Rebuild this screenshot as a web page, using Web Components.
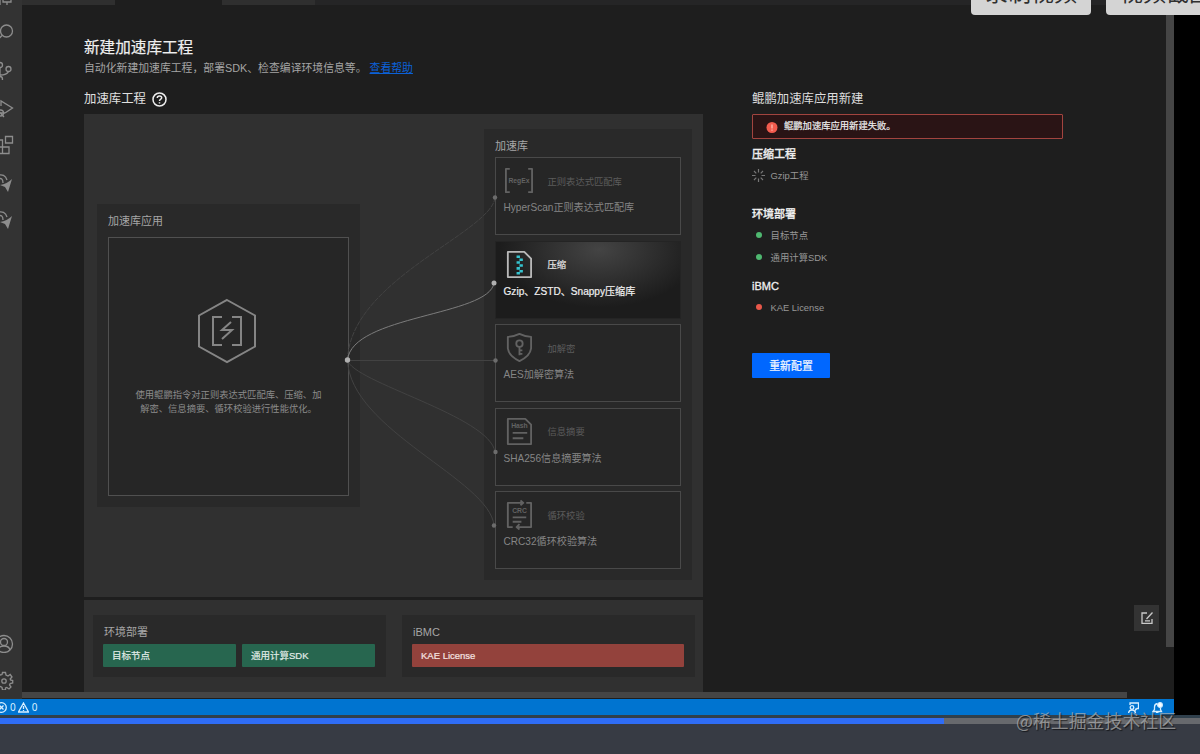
<!DOCTYPE html>
<html lang="zh-CN">
<head>
<meta charset="utf-8">
<title>新建加速库工程</title>
<style>
  html, body {
    margin: 0;
    height: 100%;
    overflow: hidden;
    background: #000;
    font-family: "Liberation Sans", "Noto Sans CJK SC", sans-serif;
  }
</style>
</head>
<body>
<player-shell></player-shell>

<script>
const define = (name, html, setup) => {
  const template = document.createElement("template");
  template.innerHTML = html;

  customElements.define(
    name,
    class extends HTMLElement {
      constructor() {
        super();
        this.attachShadow({ mode: "open" });
      }

      connectedCallback() {
        if (this.shadowRoot.firstChild) return;
        this.shadowRoot.appendChild(template.content.cloneNode(true));
        if (setup) setup.call(this, this.shadowRoot);
      }
    }
  );
};

const glyphs = {
  regex: `<path d="M7 4H3V28H7M26 4H30V28H26"/><text x="16.500" y="19" text-anchor="middle">RegEx</text>`,
  zip: `<path d="M5 3H22L29 10V29H5Z"/><path stroke="#35c3cf" stroke-width="2.600" d="M14 8h3.500M17 11h3.500M14 14h3.500M17 17h3.500M14 20h3.500M17 23h3.500M14 25h3.500"/>`,
  shield: `<path d="M17 2Q23 5 29 5V17Q28 25 17 30Q6 25 5 17V5Q11 5 17 2Z"/><circle cx="17" cy="12" r="3.300"/><path d="M17 15.500V24M17 19h3M17 22.500h3"/>`,
  hash: `<path d="M5 3H23L29 9V29H5Z"/><path d="M10 17.500H25M10 23H21"/><text x="17" y="12.500" text-anchor="middle">Hash</text>`,
  crc: `<path d="M10 29H5V4H20M24 4H29V29H15M18 1.500L21 4L18 6.500M17 26L14 29L17 31.500"/><path d="M10 19H24M10 23.500H19"/><text x="17" y="14" text-anchor="middle">CRC</text>`,
};

define(
  "lib-card",
  `<style>
    :host {
      box-sizing: border-box;
      display: flex;
      flex-direction: column;
      height: 78px;
      padding: 6px 0 0 7.500px;
      border: 1px solid #494949;
      background: #262626;
      color: #858585;
    }
    :host([active]) {
      border-color: #242424;
      background: radial-gradient(ellipse 100px 58px at 56% 10%, #444, #1c1c1c);
      color: #f0f0f0;
      -webkit-text-stroke: .2px;
    }
    .top {
      display: flex;
      align-items: center;
      gap: 14px;
      height: 33px;
      margin-left: -1px;
      font-size: 9.300px;
      color: #5c5c5c;
    }
    :host([active]) .top { color: #e4e4e4; }
    svg {
      width: 31px;
      height: 31px;
      fill: none;
      stroke: #626262;
      stroke-width: 1.900;
      stroke-linejoin: round;
    }
    :host([active]) svg { stroke: #b9b9b9; }
    svg text {
      font-size: 7px;
      font-weight: bold;
      fill: #626262;
      stroke: none;
    }
    .note {
      font-size: 10.100px;
      line-height: 21px;
      white-space: nowrap;
    }
  </style>
  <div class="top"><svg viewBox="0 0 32 32"></svg><span></span></div>
  <div class="note"><slot></slot></div>`,
  function (root) {
    root.querySelector("svg").innerHTML = glyphs[this.getAttribute("icon")];
    root.querySelector("span").textContent = this.getAttribute("name");
  }
);

define(
  "group-panel",
  `<style>
    :host {
      box-sizing: border-box;
      display: block;
      padding: 0 11px;
      background: #292929;
    }
    header {
      height: var(--head, 29px);
      font-size: 11px;
      line-height: 34px;
      text-indent: var(--indent, 0);
      color: #a6a6a6;
    }
    div {
      display: flex;
      flex-direction: var(--dir, row);
      gap: var(--gap, 6px);
    }
  </style>
  <header></header>
  <div><slot></slot></div>`,
  function (root) {
    root.querySelector("header").textContent = this.getAttribute("heading");
  }
);

define(
  "state-bar",
  `<style>
    :host {
      flex: 1;
      height: 23px;
      padding-left: 9px;
      border-radius: 1px;
      background: #27664f;
      color: #e2ece8;
      font-size: 9.500px;
      line-height: 23px;
      -webkit-text-stroke: .2px;
    }
    :host([kind="fail"]) { background: #93423c; color: #f6e4e2; }
  </style>
  <slot></slot>`
);

define(
  "app-box",
  `<style>
    :host {
      box-sizing: border-box;
      display: flex;
      flex-direction: column;
      align-items: center;
      width: 241px;
      height: 259px;
      padding-top: 60px;
      border: 1px solid #505050;
      background: #262626;
    }
    svg {
      width: 60px;
      height: 66px;
      margin-right: 3px;
      fill: none;
      stroke: #858585;
      stroke-width: 2;
    }
    p {
      width: 190px;
      margin: 24px 0 0;
      font-size: 9.300px;
      line-height: 14px;
      text-align: center;
      color: #8b8b8b;
    }
  </style>
  <svg viewBox="0 0 60 66">
    <path d="M30 2L58 17.500V48.500L30 64L2 48.500V17.500Z"/>
    <path d="M25 19H16V47H25M35 19H44V47H35M34 24L25 32H35L25 41"/>
  </svg>
  <p><slot></slot></p>`
);

define(
  "flow-board",
  `<style>
    :host {
      position: relative;
      box-sizing: border-box;
      display: flex;
      align-items: flex-start;
      gap: 124px;
      height: 483px;
      padding-left: 13px;
      background: #303030;
    }
    .app {
      --head: 33px;
      width: 263px;
      height: 303px;
      margin-top: 90px;
    }
    .libs {
      --head: 28px;
      --dir: column;
      --gap: 5.600px;
      width: 208px;
      height: 451px;
      margin-top: 15px;
    }
    .wires {
      position: absolute;
      inset: 0;
      fill: none;
      stroke: #424242;
    }
    circle { fill: #6c6c6c; stroke: none; }
    .on { stroke: #7c7c7c; }
    circle.on { fill: #b0b0b0; stroke: none; }
  </style>
  <group-panel class="app" heading="加速库应用">
    <app-box>使用鲲鹏指令对正则表达式匹配库、压缩、加<br>解密、信息摘要、循环校验进行性能优化。</app-box>
  </group-panel>
  <group-panel class="libs" heading="加速库">
    <lib-card icon="regex" name="正则表达式匹配库">HyperScan正则表达式匹配库</lib-card>
    <lib-card icon="zip" name="压缩" active>Gzip、ZSTD、Snappy压缩库</lib-card>
    <lib-card icon="shield" name="加解密">AES加解密算法</lib-card>
    <lib-card icon="hash" name="信息摘要">SHA256信息摘要算法</lib-card>
    <lib-card icon="crc" name="循环校验">CRC32循环校验算法</lib-card>
  </group-panel>
  <svg class="wires" width="619" height="483">
    <path stroke-dasharray="5 1" d="M263.500 246C266 166 406 119 411 84"/>
    <path d="M263.500 246.500H411"/>
    <path d="M263.500 246C268 268 406 302 411 338"/>
    <path d="M263.500 246C266 316 406 366 410 411.500"/>
    <path class="on" d="M263.500 246C268 201 405 202 410 169"/>
    <circle cx="411" cy="83.500" r="2.200"/>
    <circle cx="411.500" cy="246.500" r="2.200"/>
    <circle cx="411.500" cy="338" r="2.200"/>
    <circle cx="410" cy="411.500" r="2.200"/>
    <circle class="on" cx="410" cy="169" r="2.500"/>
    <circle class="on" cx="263.500" cy="246" r="2.700"/>
  </svg>`
);

define(
  "deploy-board",
  `<style>
    :host {
      box-sizing: border-box;
      display: flex;
      gap: 16px;
      height: 92px;
      margin-top: 3px;
      padding: 15px 8px 0 9px;
      background: #303030;
    }
    group-panel {
      --indent: 1px;
      flex: 1;
      height: 62px;
      padding: 0 11px 0 10px;
    }
  </style>
  <group-panel heading="环境部署">
    <state-bar>目标节点</state-bar>
    <state-bar>通用计算SDK</state-bar>
  </group-panel>
  <group-panel heading="iBMC">
    <state-bar kind="fail">KAE License</state-bar>
  </group-panel>`
);

define(
  "status-line",
  `<style>
    :host {
      display: flex;
      align-items: center;
      height: 22px;
      font-size: 9.400px;
      color: #979797;
    }
    i {
      width: 6px;
      height: 6px;
      margin: 0 9px 0 3.500px;
      border-radius: 50%;
      background: #4fb870;
    }
    :host([state="fail"]) i { background: #e8584a; }
    :host([state="busy"]) i { display: none; }
    svg {
      display: none;
      width: 13px;
      height: 13px;
      margin-right: 5.500px;
      stroke: #777;
      stroke-width: 1.200;
    }
    :host([state="busy"]) svg { display: block; }
  </style>
  <i></i>
  <svg viewBox="0 0 13 13"><path d="M6.500 0V3.500M6.500 9.500V13M0 6.500H3.500M9.500 6.500H13M2 2L4.300 4.300M8.700 8.700L11 11M2 11L4.300 8.700M8.700 4.300L11 2"/></svg>
  <span><slot></slot></span>`
);

define(
  "result-panel",
  `<style>
    :host {
      display: block;
      width: 311px;
      padding-top: 53px;
    }
    h2, h3 { margin: 0; line-height: 20px; color: #ddd; }
    h2 { font-size: 12.400px; font-weight: 400; }
    h3 {
      font-size: 11px;
      font-weight: 500;
      color: #f0f0f0;
      -webkit-text-stroke: .3px;
    }
    .alert {
      box-sizing: border-box;
      display: flex;
      align-items: center;
      gap: 6px;
      height: 25px;
      margin: 5px 0;
      padding-left: 13px;
      border: 1px solid #a2443f;
      border-radius: 1px;
      background: #2a1415;
      font-size: 9.300px;
      color: #eee;
    }
    .alert svg { width: 12px; height: 12px; }
    .alert span { padding-bottom: 3px; -webkit-text-stroke: .2px; }
    .env { margin-top: 18px; }
    .bmc { margin-top: 8px; }
    button {
      display: block;
      width: 78px;
      height: 25px;
      margin-top: 35px;
      padding: 0 0 2px;
      border: 0;
      border-radius: 1px;
      background: #0067ff;
      font: 500 10.900px "Liberation Sans", "Noto Sans CJK SC", sans-serif;
      color: #e6f0ff;
      -webkit-text-stroke: .2px;
    }
  </style>
  <h2>鲲鹏加速库应用新建</h2>
  <div class="alert">
    <svg viewBox="0 0 12 12"><circle cx="6" cy="6.500" r="5.500" fill="#f25b4e"/><path d="M6 3.500V7.500M6 8.500V9.700" stroke="#ffb9ae" stroke-width="1.300"/></svg>
    <span>鲲鹏加速库应用新建失败。</span>
  </div>
  <h3>压缩工程</h3>
  <status-line state="busy">Gzip工程</status-line>
  <h3 class="env">环境部署</h3>
  <status-line>目标节点</status-line>
  <status-line>通用计算SDK</status-line>
  <h3 class="bmc">iBMC</h3>
  <status-line state="fail">KAE License</status-line>
  <button>重新配置</button>`
);

define(
  "activity-bar",
  `<style>
    :host {
      display: flex;
      flex-direction: column;
      justify-content: space-between;
      flex: none;
      width: 22px;
      height: 699px;
      overflow: hidden;
      background: #333;
    }
    div { display: flex; flex-direction: column; }
    .views { margin-top: -24px; }
    svg {
      width: 20px;
      height: 20px;
      margin: 8.800px 0 8.800px -6.500px;
      fill: none;
      stroke: #8d8d8d;
      stroke-width: 1.300;
    }
    .solid { fill: #8d8d8d; stroke: none; }
  </style>
  <div class="views">
    <svg viewBox="0 0 20 20"><path d="M9 4H17V17H9ZM6 7V21H13V17"/></svg>
    <svg viewBox="0 0 20 20"><circle cx="12.500" cy="9" r="6"/><path d="M8 13.500L3 18.500"/></svg>
    <svg viewBox="0 0 20 20"><circle cx="14.500" cy="9" r="2.500"/><circle cx="6" cy="5" r="2.500"/><circle cx="6" cy="19" r="2.500"/><path d="M6 7.500V16.500M14.500 11.500Q13 15 6 15"/></svg>
    <svg viewBox="0 0 20 20"><path d="M7 8V3L18.500 10L11 15"/><circle cx="6.500" cy="15" r="3"/><path d="M3 11L10 19M2 15H11"/></svg>
    <svg viewBox="0 0 20 20"><path d="M11.500 1.500H18.500V8H11.500ZM2 5H8.500V18.500H15V12H2M2 18.500H9"/></svg>
    <svg viewBox="0 0 20 20"><path d="M3 2.500Q11 0 13 7M4 6Q9 4 9 10"/><path class="solid" d="M18 6L14 19L11 14L6 12Q13 11 18 6Z"/></svg>
    <svg viewBox="0 0 20 20"><path d="M3 2.500Q11 0 13 7M4 6Q9 4 9 10"/><path class="solid" d="M18 6L14 19L11 14L6 12Q13 11 18 6Z"/></svg>
  </div>
  <div>
    <svg viewBox="0 0 20 20"><circle cx="10" cy="11" r="8.500"/><circle cx="10" cy="9" r="3.500"/><path d="M4 17Q5 13 10 13T16 17"/></svg>
    <svg viewBox="0 -1 20 20"><circle cx="10" cy="10" r="2.200"/><path d="M8.500 1.500H11.500L12 4L14 5L16.200 3.500L18 6L16.200 8L16.500 9L18.700 9.500V12L16.200 12.500L15.500 14L17 16L15 18L12.800 16.500L11.500 17V19H8.500L8 16.500L6.500 15.500L4 17L2 15L3.500 13L3 11.500L1 11V8.500L3.500 8L4 6.500L2.500 4.500L4.500 2.500L6.500 4L8 3.500Z"/></svg>
  </div>`
);

define(
  "editor-tabs",
  `<style>
    :host { display: flex; height: 5px; background: #252526; }
    i { width: 93px; background: #2f2f2f; }
    .open { width: 107px; background: #1e1e1e; }
  </style>
  <i></i><i class="open"></i><i></i>`
);

define(
  "editor-page",
  `<style>
    :host {
      position: relative;
      flex: 1;
      height: 699px;
      overflow: hidden;
      background: #1e1e1e;
    }
    main {
      display: flex;
      gap: 49px;
      padding: 31px 0 0 62px;
    }
    .left { width: 619px; }
    h1 {
      margin: 0;
      font-size: 15.600px;
      font-weight: 400;
      line-height: 23px;
      color: #efefef;
      -webkit-text-stroke: .2px;
    }
    p {
      margin: 0;
      font-size: 10.850px;
      line-height: 18px;
      color: #a5a5a5;
      white-space: nowrap;
    }
    a { margin-left: 3px; color: #0b61d8; text-decoration: underline; }
    h2 {
      display: flex;
      align-items: center;
      gap: 6px;
      margin: 12px 0 5px;
      font-size: 12.400px;
      font-weight: 400;
      line-height: 20px;
      color: #e0e0e0;
    }
    h2 svg { width: 15px; height: 15px; fill: none; stroke: #eee; stroke-width: 1.500; }
    .vbar, .hbar { position: absolute; background: #454545; }
    .vbar { top: 0; right: 0; width: 8px; height: 647px; }
    .hbar { left: 0; bottom: 1px; width: 1105px; height: 6px; }
    .edit {
      position: absolute;
      right: 15px;
      top: 605px;
      display: grid;
      place-items: center;
      width: 25px;
      height: 26px;
      background: #333;
    }
    .edit svg { width: 12px; height: 12px; fill: none; stroke: #c9c9c9; stroke-width: 1.300; }
  </style>
  <editor-tabs></editor-tabs>
  <main>
    <div class="left">
      <h1>新建加速库工程</h1>
      <p>自动化新建加速库工程，部署SDK、检查编译环境信息等。<a>查看帮助</a></p>
      <h2>加速库工程<svg viewBox="0 0 15 15"><circle cx="7.500" cy="7.500" r="6.500"/><path d="M5.300 6Q5.300 4 7.500 4T9.700 5.800Q9.700 6.800 8.500 7.300Q7.500 7.800 7.500 9M7.500 10.200V11.600"/></svg></h2>
      <flow-board></flow-board>
      <deploy-board></deploy-board>
    </div>
    <result-panel></result-panel>
  </main>
  <div class="vbar"></div>
  <div class="hbar"></div>
  <div class="edit"><svg viewBox="0 0 12 12"><path d="M6 1H1V11.300H11V7M11.500 .5L5.500 7M4 8.800H9"/></svg></div>`
);

define(
  "status-bar",
  `<style>
    :host {
      display: flex;
      align-items: center;
      gap: 3px;
      width: 1174px;
      height: 16px;
      background: #0074d0;
      color: #d8efff;
      font: 10px "Noto Sans", sans-serif;
      overflow: hidden;
    }
    svg { width: 11px; height: 11px; fill: none; stroke: #d8efff; stroke-width: 1.300; }
    span { margin-right: -1px; }
    .err { margin-left: -4px; }
    .chat { margin-left: auto; }
    .bell { margin: 0 11px 0 10px; }
  </style>
  <svg class="err" viewBox="0 0 11 11"><circle cx="5.500" cy="5.500" r="4.800"/><path d="M3.500 3.500L7.500 7.500M7.500 3.500L3.500 7.500"/></svg>
  <span>0</span>
  <svg viewBox="0 0 11 11"><path d="M5.500 1L10.500 10H.5ZM5.500 4V7M5.500 8V9"/></svg>
  <span>0</span>
  <svg class="chat" viewBox="0 0 11 11"><path d="M2 3V1H10.500V6.500H9L7.500 8V6.500"/><circle cx="4" cy="5.500" r="1.800"/><path d="M.5 11Q1 8 4 8T7.500 11"/></svg>
  <svg class="bell" viewBox="0 0 11 11"><path d="M5.500 1.500Q2.500 2 2.500 5V7.500L1 9.500H9.500L8.500 7.500V6M4 10.800H6.500"/><circle cx="8" cy="3" r="2.300" fill="#fff"/></svg>`
);

define(
  "play-bar",
  `<style>
    :host {
      display: block;
      height: 39px;
      background: linear-gradient(#30404c 3px, #373b44 3px);
    }
    div { padding-top: 3px; }
    div::before {
      content: "";
      display: block;
      height: 6px;
      background: linear-gradient(90deg, #2f6df6 944px, #67696d 944px);
    }
  </style>
  <div></div>`
);

define(
  "player-shell",
  `<style>
    :host {
      position: relative;
      display: block;
      width: 1200px;
      height: 754px;
      overflow: hidden;
    }
    .work { display: flex; width: 1174px; }
    .actions {
      position: absolute;
      top: -23px;
      left: 971px;
      display: flex;
      gap: 15px;
    }
    .actions span {
      width: 120px;
      height: 38px;
      border-radius: 4px;
      background: #d4d4d4;
      font-size: 23px;
      line-height: 32px;
      text-align: center;
      color: #303030;
    }
    .mark {
      position: absolute;
      left: 1016px;
      top: 707px;
      font: 17.900px/26px "Noto Sans CJK SC", sans-serif;
      color: rgba(180, 180, 180, .7);
      text-shadow: 1px 1px 1px rgba(0, 0, 0, .6);
      white-space: nowrap;
    }
  </style>
  <div class="work">
    <activity-bar></activity-bar>
    <editor-page></editor-page>
  </div>
  <status-bar></status-bar>
  <play-bar></play-bar>
  <div class="actions"><span>录制视频</span><span>视频截图</span></div>
  <div class="mark">@稀土掘金技术社区</div>`
);
</script>
</body>
</html>
